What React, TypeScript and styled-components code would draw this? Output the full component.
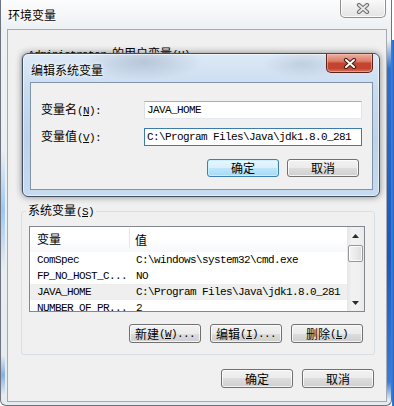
import React from 'react';
import styled, { createGlobalStyle } from 'styled-components';

const GlobalStyle = createGlobalStyle`
  html, body { margin: 0; padding: 0; background: #ffffff; }
  body {
    font-family: "Noto Sans CJK SC", "Noto Sans", sans-serif;
    font-size: 12px;
    color: #000;
  }
  #root { width: 394px; height: 406px; overflow: hidden; }
  * { box-sizing: border-box; }
`;

const Desktop = styled.div`
  position: relative;
  width: 394px;
  height: 406px;
  overflow: hidden;
  background:
    linear-gradient(90deg, #3b7fd8, #1f5fc6) right 0 top 40px / 2px 366px no-repeat,
    #ffffff;
`;

const OuterWindow = styled.div`
  width: 392px;
  height: 406px;
  display: flex;
  flex-direction: column;
  padding: 0 4px 3px 6px;
  border: 1px solid #6c737c;
  border-top: none;
  border-radius: 0 0 6px 6px;
  background:
    linear-gradient(180deg, rgba(140,180,230,0), #2e6fd0 8%, #1c58bf 60%, #3a7cd6 95%, rgba(140,180,230,0)) right 0 top 40px / 5px 360px no-repeat,
    linear-gradient(180deg, rgba(160,200,240,0), rgba(150,195,240,0.9) 50%, rgba(160,200,240,0)) left 0 top 150px / 4px 120px no-repeat,
    linear-gradient(180deg, rgba(160,200,240,0), rgba(120,170,230,0.9) 50%, rgba(160,200,240,0)) left 0 top 355px / 4px 40px no-repeat,
    linear-gradient(180deg, #fbfcfd 0%, #eef1f4 28px, #e6ebf0 100%);
`;

const TitleBar = styled.div`
  height: 29px;
  flex: none;
  display: flex;
  align-items: flex-start;
`;

const Title = styled.div`
  align-self: center;
  padding-left: 1px;
  font-size: 12px;
  line-height: 14px;
  color: #000;
  text-shadow: 0 0 6px rgba(255,255,255,1), 0 0 3px rgba(255,255,255,1);
`;

const CloseButton = styled.div<{ $active?: boolean }>`
  margin-left: auto;
  margin-right: ${p => (p.$active ? '0' : '1px')};
  margin-top: ${p => (p.$active ? '0' : '-1px')};
  width: ${p => (p.$active ? '47px' : '46px')};
  height: ${p => (p.$active ? '19px' : '19px')};
  display: flex;
  align-items: center;
  justify-content: center;
  border: 1px solid ${p => (p.$active ? '#5a2318' : '#8f8f8f')};
  border-top: none;
  border-radius: 0 0 5px 5px;
  background: ${p =>
    p.$active
      ? 'linear-gradient(180deg, #eab0a2 0%, #dc7c66 40%, #c6442f 52%, #c04431 80%, #d9745f 100%)'
      : 'linear-gradient(180deg, #fbfbfb 0%, #eeeeee 50%, #e4e4e4 100%)'};
  box-shadow: inset 0 0 0 1px ${p => (p.$active ? 'rgba(255,200,190,0.5)' : 'rgba(255,255,255,0.8)')};
`;

const ClientArea = styled.div`
  flex: 1;
  display: flex;
  flex-direction: column;
  background: #f0f0f0;
  border: 1px solid #a3aab3;
  padding: 0 11px 0 13px;
`;

const GroupBox = styled.fieldset<{ $top: number; $height?: number }>`
  margin: ${p => p.$top}px 0 0 0;
  padding: 7px 9px 11px 7px;
  border: 1px solid #d5dfe5;
  border-radius: 3px;
  min-width: 0;
  ${p => (p.$height ? `height: ${p.$height}px;` : '')}
`;

const Legend = styled.legend`
  margin-left: -3px;
  padding: 0 2px;
  font-size: 12px;
  line-height: 14px;
  color: #000;
`;

const Latin = styled.span`
  font-family: "Liberation Mono", monospace;
  font-size: 11px;
  letter-spacing: -0.6px;
`;

const ListView = styled.div`
  height: 86px;
  border: 1px solid #828790;
  background: #ffffff;
  display: grid;
  grid-template-columns: 1fr 17px;
  overflow: hidden;
`;

const ListBody = styled.div`
  display: flex;
  flex-direction: column;
  overflow: hidden;
`;

const HeaderRow = styled.div`
  height: 25px;
  flex: none;
  display: grid;
  grid-template-columns: 100px 1fr;
  background: linear-gradient(180deg, #ffffff 0%, #ffffff 50%, #f7f8fa 100%);
`;

const HeaderCell = styled.div<{ $first?: boolean }>`
  display: flex;
  align-items: center;
  padding-left: ${p => (p.$first ? '7px' : '5px')};
  border-right: ${p => (p.$first ? '1px solid #e3e6ea' : 'none')};
  font-size: 12px;
  margin: ${p => (p.$first ? '1px 0 4px 0' : '0')};
`;

const Row = styled.div<{ $selected?: boolean }>`
  height: 16px;
  flex: none;
  display: grid;
  grid-template-columns: 100px 1fr;
  align-items: center;
  background: ${p => (p.$selected ? '#efefef' : 'transparent')};
  font-family: "Liberation Mono", monospace;
  font-size: 11px;
  letter-spacing: -0.6px;
  white-space: nowrap;
`;

const Cell = styled.div<{ $first?: boolean }>`
  padding-left: ${p => (p.$first ? '7px' : '6px')};
  overflow: hidden;
`;

const ScrollBar = styled.div`
  display: flex;
  flex-direction: column;
  background: linear-gradient(90deg, #e6e6e6 0%, #f2f2f2 30%, #f0f0f0 70%, #e9e9e9 100%);
`;

const ScrollArrow = styled.div`
  height: 17px;
  flex: none;
  display: flex;
  align-items: center;
  justify-content: center;
`;

const ScrollThumb = styled.div`
  height: 17px;
  margin: 1px 1px 0 1px;
  flex: none;
  border: 1px solid #979797;
  border-radius: 2px;
  background: linear-gradient(90deg, #f5f5f5 0%, #ebebeb 50%, #dcdcdc 100%);
  box-shadow: inset 0 0 0 1px rgba(255,255,255,0.8);
`;

const ScrollTrack = styled.div`
  flex: 1;
`;

const ButtonRow = styled.div<{ $top: number; $right: number; $gap: number }>`
  margin-top: ${p => p.$top}px;
  padding-right: ${p => p.$right}px;
  display: flex;
  justify-content: flex-end;
  gap: ${p => p.$gap}px;
`;

const Button = styled.div<{ $default?: boolean; $h?: number }>`
  width: 72px;
  height: ${p => p.$h ?? 19}px;
  display: flex;
  align-items: center;
  justify-content: center;
  border: 1px solid ${p => (p.$default ? '#3c7fb1' : '#707070')};
  border-radius: 3px;
  background: ${p =>
    p.$default
      ? 'linear-gradient(180deg, #eaf6fd 0%, #d9f0fc 50%, #bee6fd 50%, #a7d9f5 100%)'
      : 'linear-gradient(180deg, #f2f2f2 0%, #ebebeb 50%, #dddddd 50%, #cfcfcf 100%)'};
  box-shadow: inset 0 0 0 1px ${p => (p.$default ? 'rgba(200,240,255,0.9)' : 'rgba(255,255,255,0.75)')};
  font-size: 12px;
  line-height: 14px;
  color: #000;
  white-space: nowrap;
`;

const InnerDialog = styled.div`
  position: absolute;
  left: 22px;
  top: 53px;
  width: 358px;
  height: 144px;
  display: flex;
  flex-direction: column;
  padding: 0 6px 6px 7px;
  border: 1px solid #3f4f60;
  border-radius: 6px;
  background:
    radial-gradient(ellipse 60px 18px at 120px 8px, rgba(120,140,165,0.35), rgba(120,140,165,0)),
    radial-gradient(ellipse 40px 14px at 280px 10px, rgba(120,140,165,0.25), rgba(120,140,165,0)),
    linear-gradient(180deg, #dde9f6 0%, #c9dcf0 25%, #bcd3eb 60%, #c6dbf0 100%);
  box-shadow: 0 0 7px rgba(0,0,0,0.45), inset 0 0 0 1px rgba(255,255,255,0.55);
`;

const InnerTitleBar = styled.div`
  height: 28px;
  flex: none;
  display: flex;
  align-items: flex-start;
`;

const InnerTitle = styled.div`
  align-self: center;
  padding-left: 1px;
  padding-top: 3px;
  font-size: 12px;
  line-height: 14px;
  text-shadow: 0 0 6px rgba(255,255,255,0.95), 0 0 3px rgba(255,255,255,0.95);
`;

const InnerClient = styled.div`
  flex: 1;
  background: #f0f0f0;
  border: 1px solid #7e92a8;
  padding: 18px 10px 0 10px;
  display: flex;
  flex-direction: column;
`;

const FormGrid = styled.div`
  display: grid;
  grid-template-columns: 103px 1fr;
  row-gap: 9px;
  align-items: center;
`;

const FieldLabel = styled.div`
  font-size: 12px;
  line-height: 14px;
  white-space: nowrap;
`;

const TextBox = styled.div<{ $focused?: boolean }>`
  height: 18px;
  display: flex;
  align-items: center;
  padding-left: 2px;
  background: #ffffff;
  border: 1px solid ${p => (p.$focused ? '#3d7bad' : '#abadb3')};
  border-color: ${p => (p.$focused ? '#3d7bad' : '#abadb3 #e2e3ea #e3e9ef #dbdfe6')};
  font-family: "Liberation Mono", monospace;
  font-size: 11px;
  letter-spacing: -0.6px;
  white-space: nowrap;
  overflow: hidden;
`;

const XGlyph: React.FC<{ active?: boolean }> = ({ active }) => (
  <svg width="14" height="11" viewBox="0 0 14 11">
    <path d="M3 2 L11 9 M11 2 L3 9" stroke={active ? '#4a1e16' : '#6f6f6f'} strokeWidth="4.2" strokeLinecap="round" fill="none" />
    <path d="M3 2 L11 9 M11 2 L3 9" stroke={active ? '#ffffff' : '#e8e8e8'} strokeWidth="2" strokeLinecap="round" fill="none" />
  </svg>
);

const ArrowGlyph: React.FC<{ down?: boolean }> = ({ down }) => (
  <svg width="7" height="4" viewBox="0 0 7 4">
    <path d={down ? 'M0 0 L7 0 L3.5 4 Z' : 'M0 4 L7 4 L3.5 0 Z'} fill="#2b2b2b" />
  </svg>
);

const rows = [
  { name: 'ComSpec', value: 'C:\\windows\\system32\\cmd.exe' },
  { name: 'FP_NO_HOST_C...', value: 'NO' },
  { name: 'JAVA_HOME', value: 'C:\\Program Files\\Java\\jdk1.8.0_281', selected: true },
  { name: 'NUMBER_OF_PR...', value: '2' },
];

export default function App() {
  return (
    <Desktop>
      <GlobalStyle />
      <OuterWindow>
        <TitleBar>
          <Title>环境变量</Title>
          <CloseButton>
            <XGlyph />
          </CloseButton>
        </TitleBar>
        <ClientArea>
          <GroupBox $top={16} $height={146}>
            <Legend>
              <Latin>Administrator </Latin>的用户变量<Latin>(<u>U</u>)</Latin>
            </Legend>
          </GroupBox>
          <GroupBox $top={11}>
            <Legend>
              系统变量<Latin>(<u>S</u>)</Latin>
            </Legend>
            <ListView>
              <ListBody>
                <HeaderRow>
                  <HeaderCell $first>变量</HeaderCell>
                  <HeaderCell>值</HeaderCell>
                </HeaderRow>
                {rows.map(r => (
                  <Row key={r.name} $selected={r.selected}>
                    <Cell $first>{r.name}</Cell>
                    <Cell>{r.value}</Cell>
                  </Row>
                ))}
              </ListBody>
              <ScrollBar>
                <ScrollArrow>
                  <ArrowGlyph />
                </ScrollArrow>
                <ScrollThumb />
                <ScrollTrack />
                <ScrollArrow>
                  <ArrowGlyph down />
                </ScrollArrow>
              </ScrollBar>
            </ListView>
            <ButtonRow $top={12} $right={2} $gap={9}>
              <Button>新建<Latin>(<u>W</u>)...</Latin></Button>
              <Button>编辑<Latin>(<u>I</u>)...</Latin></Button>
              <Button>删除<Latin>(<u>L</u>)</Latin></Button>
            </ButtonRow>
          </GroupBox>
          <ButtonRow $top={14} $right={1} $gap={9}>
            <Button>确定</Button>
            <Button>取消</Button>
          </ButtonRow>
        </ClientArea>
      </OuterWindow>

      <InnerDialog>
        <InnerTitleBar>
          <InnerTitle>编辑系统变量</InnerTitle>
          <CloseButton $active>
            <XGlyph active />
          </CloseButton>
        </InnerTitleBar>
        <InnerClient>
          <FormGrid>
            <FieldLabel>变量名<Latin>(<u>N</u>):</Latin></FieldLabel>
            <TextBox>JAVA_HOME</TextBox>
            <FieldLabel>变量值<Latin>(<u>V</u>):</Latin></FieldLabel>
            <TextBox $focused>C:\Program Files\Java\jdk1.8.0_281</TextBox>
          </FormGrid>
          <ButtonRow $top={13} $right={3} $gap={8}>
            <Button $default $h={18}>确定</Button>
            <Button $h={18}>取消</Button>
          </ButtonRow>
        </InnerClient>
      </InnerDialog>
    </Desktop>
  );
}
